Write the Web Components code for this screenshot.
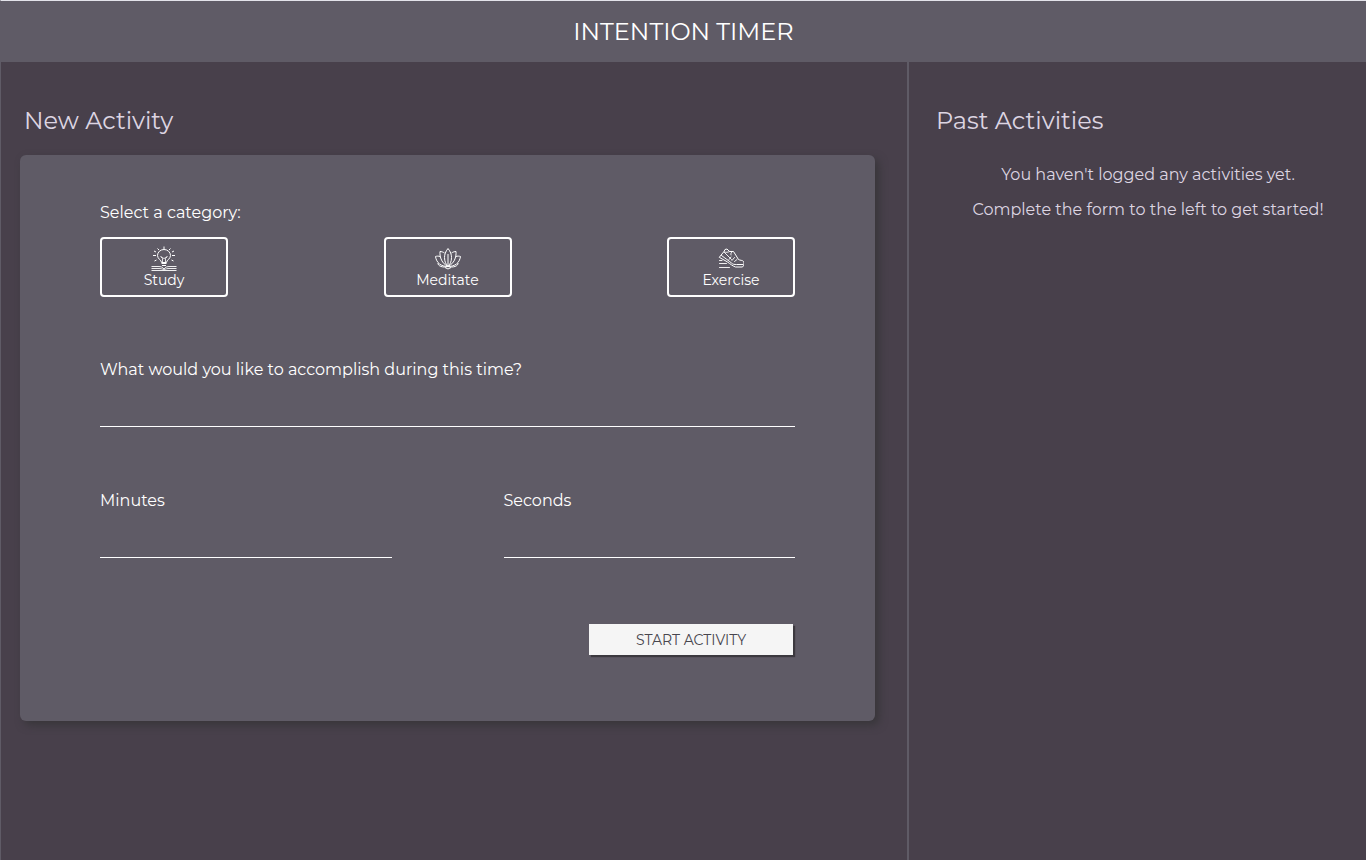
<!DOCTYPE html>
<html lang="en">
<head>
<meta charset="utf-8">
<meta name="viewport" content="width=device-width, initial-scale=1">
<title>Intention Timer</title>
<style>
  body {
    margin: 0;
    background: #48404b;
    color: #fff;
    font-family: Montserrat, Inter, sans-serif;
    font-size: 16px;
    line-height: 20px;
  }
</style>
</head>
<body>
<intention-app>
  <app-header slot="header">INTENTION TIMER</app-header>
  <activity-form slot="main"></activity-form>
  <past-activities slot="aside">
    <p>You haven't logged any activities yet.</p>
    <p>Complete the form to the left to get started!</p>
  </past-activities>
</intention-app>

<template id="app-template">
  <style>
    :host {
      display: flex;
      flex-direction: column;
      min-height: 100vh;
      box-sizing: border-box;
      border-top: 1px solid #e3e3ea;
      border-left: 1px solid #5f5b66;
    }
    main {
      flex: 1;
      display: grid;
      grid-template-columns: minmax(0, 906fr) minmax(0, 459fr);
    }
  </style>
  <slot name="header"></slot>
  <main>
    <slot name="main"></slot>
    <slot name="aside"></slot>
  </main>
</template>

<template id="header-template">
  <style>
    :host { display: block; background: #5f5b66; }
    h1 {
      margin: 0;
      padding: 16px 0 15px;
      text-align: center;
      font-size: 24px;
      font-weight: 400;
      line-height: 30px;
    }
  </style>
  <header><h1><slot></slot></h1></header>
</template>

<template id="category-template">
  <style>
    :host { display: block; }
    button {
      display: flex;
      flex-direction: column;
      align-items: center;
      width: 128px;
      height: 60px;
      box-sizing: border-box;
      padding: 6px 0;
      border: 2px solid #fff;
      border-radius: 4px;
      background: transparent;
      color: inherit;
      font: inherit;
      font-size: 14px;
      line-height: 18px;
      cursor: pointer;
    }
    ::slotted(svg) { display: block; }
  </style>
  <button type="button"><slot name="icon"></slot><span><slot></slot></span></button>
</template>

<template id="field-template">
  <style>
    :host { display: block; }
    label { display: block; }
    input {
      display: block;
      width: 100%;
      height: 36px;
      margin-top: 11px;
      box-sizing: border-box;
      padding: 0;
      border: 0;
      border-bottom: 1px solid #fff;
      border-radius: 0;
      outline: none;
      background: transparent;
      color: inherit;
      font: inherit;
    }
  </style>
  <label for="field"></label>
  <input id="field" type="text">
</template>

<template id="form-template">
  <style>
    :host { display: block; padding: 44px 32px 40px 19px; }
    h2 {
      margin: 0 0 19px;
      padding-left: 4px;
      color: #ddd5e2;
      font-size: 24px;
      font-weight: 400;
      line-height: 30px;
    }
    form {
      padding: 48px 80px 66px;
      border-radius: 6px;
      background: #5f5b66;
      box-shadow: 4px 4px 8px #38363a;
    }
    fieldset { margin: 0; padding: 0; border: 0; min-width: 0; }
    legend { padding: 0; margin-bottom: 14px; }
    .categories { display: flex; justify-content: space-between; }
    .goal { margin-top: 63px; }
    .times {
      display: grid;
      grid-template-columns: 1fr 1fr;
      gap: 112px;
      margin-top: 64px;
    }
    .start {
      display: block;
      width: 204px;
      height: 31px;
      margin: 66px 2px 0 auto;
      padding: 0;
      border: 0;
      background: #f5f5f5;
      box-shadow: 2px 2px 1px #3c393f;
      color: #48464e;
      font: inherit;
      font-size: 14px;
      cursor: pointer;
    }
  </style>
  <h2>New Activity</h2>
  <form>
    <fieldset>
      <legend>Select a category:</legend>
      <div class="categories">
        <category-button>
          <svg slot="icon" width="26" height="26" viewBox="0 0 26 26" fill="none" stroke="#fff" aria-hidden="true">
            <path d="M13 1.500v3M6.500 3.500l1.500 1.500M19.500 3.500L18 5M3 6l2 1M23 6l-2 1M2 10.500h3M21 10.500h3M3.500 16l2-1M22.500 16l-2-1"/>
            <path d="M10.500 17.500c0-2.500-4-3.500-4-7a6.500 6 0 0 1 13 0c0 3.500-4 4.500-4 7zM10.500 18.500h5M11 20.500h4"/>
            <path d="M11.500 17v-3.500l-2-2.500M14.500 17v-3.500l2-2.500M10 12l3 1.500 3-1.500" stroke-width=".8"/>
            <path d="M.5 21.500h6.500c3 0 4.500.5 6 2.500 1.500-2 3-2.500 6-2.500h6.500M.5 23.500h6.500c3 0 4.500.3 6 1.500 1.500-1.200 3-1.500 6-1.500h6.500M.5 25.500h25" stroke-width=".9"/>
          </svg>Study</category-button>
        <category-button>
          <svg slot="icon" width="26" height="26" viewBox="0 0 26 26" fill="none" stroke="#fff" stroke-linejoin="round" aria-hidden="true">
            <path transform="translate(0 1)" d="M13 2.500c-2.500 3-3.500 6-3.500 9 0 4 1.500 7 3.500 9 2-2 3.500-5 3.500-9 0-3-1-6-3.500-9zM13 8v12M9.500 7C8 6 6.500 5.500 5 5.500c-.5 6 2 12 8 15M16.500 7c1.500-1 3-1.500 4.500-1.500.5 6-2 12-8 15M5 10.500c-1.500-.5-3-.5-4.500 0C1.500 17 6 20.500 13 20.500c7 0 11.500-3.500 12.500-10-1.500-.5-3-.5-4.500 0M3 17c-.5 3 5 5 10 3.500C18 22 23.500 20 23 17M10 21.500l3 1.500 3-1.500"/>
          </svg>Meditate</category-button>
        <category-button>
          <svg slot="icon" width="26" height="26" viewBox="0 0 26 26" fill="none" stroke="#fff" stroke-linejoin="round" stroke-linecap="round" aria-hidden="true">
            <path d="M1.500 12L6 6.500l1-2 2-.5 2.500 2.500 4 0 5 8c1.500 1 4 .5 5 2 1 1.500.5 4-1 5.500h-7C14.500 21 12.500 19 9.500 17zM3.500 10.500c4 3 7 5 10 7.500 1.500 1.500 3 1.500 5 1.500h6.500"/>
            <path d="M6.500 7.500l7 7M14.500 6.500c-1.500 1-2 2-1.500 3.500M11 14.500l2-2.500M14 15.500l2.500-3M16.500 16.500l2.500-2M6 7c2 .5 4 .5 5.500-.5M1.500 15.500h2.500M1.500 18.500h7M1.500 22.500h10" stroke-width=".9"/>
          </svg>Exercise</category-button>
      </div>
    </fieldset>
    <line-field class="goal" label="What would you like to accomplish during this time?"></line-field>
    <div class="times">
      <line-field label="Minutes"></line-field>
      <line-field label="Seconds"></line-field>
    </div>
    <button class="start" type="button">START ACTIVITY</button>
  </form>
</template>

<template id="past-template">
  <style>
    :host {
      display: block;
      padding: 44px 0 40px 21px;
      border-left: 2px solid #5f5b66;
      color: #ddd5e2;
      text-align: center;
    }
    h2 {
      margin: 0 0 29px;
      padding-left: 6px;
      text-align: left;
      font-size: 24px;
      font-weight: 400;
      line-height: 30px;
    }
    ::slotted(p) { margin: 0 0 15px; }
  </style>
  <h2>Past Activities</h2>
  <slot></slot>
</template>

<script>
  class TemplateElement extends HTMLElement {
    constructor() {
      super();
      const template = document.getElementById(this.constructor.template);
      this.attachShadow({ mode: 'open' }).append(template.content.cloneNode(true));
    }
  }

  class IntentionApp extends TemplateElement { static template = 'app-template'; }
  class AppHeader extends TemplateElement { static template = 'header-template'; }
  class PastActivities extends TemplateElement { static template = 'past-template'; }
  class ActivityForm extends TemplateElement { static template = 'form-template'; }
  class CategoryButton extends TemplateElement { static template = 'category-template'; }
  class LineField extends TemplateElement {
    static template = 'field-template';
    connectedCallback() {
      this.shadowRoot.querySelector('label').textContent = this.getAttribute('label');
    }
  }

  customElements.define('category-button', CategoryButton);
  customElements.define('line-field', LineField);
  customElements.define('app-header', AppHeader);
  customElements.define('activity-form', ActivityForm);
  customElements.define('past-activities', PastActivities);
  customElements.define('intention-app', IntentionApp);
</script>
</body>
</html>
